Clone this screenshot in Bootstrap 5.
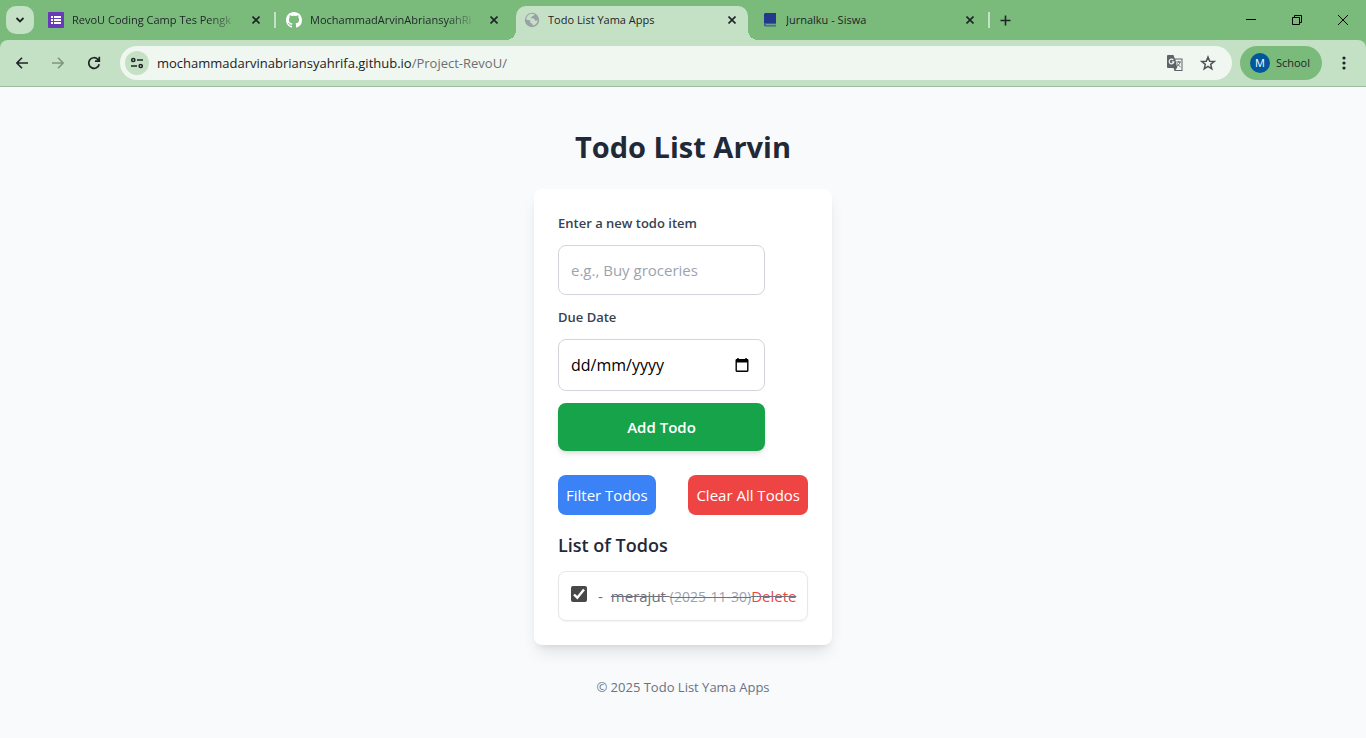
<!DOCTYPE html>
<html lang="en-GB">
<head>
<meta charset="utf-8">
<meta name="viewport" content="width=device-width, initial-scale=1">
<title>Todo List Yama Apps</title>
<link href="https://cdn.jsdelivr.net/npm/bootstrap@5.3.0/dist/css/bootstrap.min.css" rel="stylesheet">
<style>
  :root { --frame: #7abb7c; --bar: #c5e1c5; --ink: #1f2328; }
  body { font-family: "Open Sans", "Noto Sans", sans-serif; font-size: 15px; line-height: 24px; background: #f9fafc; color: #1f2937; }
  svg { display: block; flex: none; }
  .bare { border: 0; background: none; padding: 0; color: inherit; }

  /* Tab strip */
  .tab-strip { height: 40px; padding-left: 6px; background: var(--frame); color: var(--ink); font-size: 11px; line-height: 16px; }
  .tab-search { width: 28px; height: 28px; margin-right: 6px; border-radius: 10px; background: var(--bar); }
  .tab-item { flex: 0 1 238px; min-width: 0; padding: 0 14px 0 8px; }
  .tab-item .title { overflow: hidden; white-space: nowrap; }
  .title-fade { -webkit-mask-image: linear-gradient(90deg, #000 calc(100% - 32px), transparent); mask-image: linear-gradient(90deg, #000 calc(100% - 32px), transparent); }
  .tab-close { width: 16px; height: 16px; flex: none; }
  .tab-divided { border-right: 2px solid var(--bar); height: 16px; margin-right: 2px; flex-basis: 236px; padding-right: 10px; }
  .tab-active { align-self: flex-end; height: 34px; padding-bottom: 6px; background: var(--bar); border-radius: 10px 10px 0 0; flex-basis: 232px; padding-right: 8px; margin-right: 6px; position: relative; }
  .tab-active::before, .tab-active::after { content: ""; position: absolute; bottom: 0; width: 10px; height: 10px; }
  .tab-active::before { right: 100%; background: radial-gradient(circle at 0 0, transparent 10px, var(--bar) 10px); }
  .tab-active::after { left: 100%; background: radial-gradient(circle at 100% 0, transparent 10px, var(--bar) 10px); }
  .win-btn { width: 46px; height: 40px; }

  /* Toolbar */
  .toolbar-wrap { background: var(--frame); }
  .toolbar { height: 47px; background: var(--bar); border-bottom: 1px solid #9dbb9f; border-radius: 8px 8px 0 0; color: var(--ink); }
  .tool-btn { width: 36px; height: 34px; }
  .omnibox { height: 34px; border-radius: 17px; background: #f0f7f0; padding: 0 16px 0 5px; }
  .site-info { width: 24px; height: 24px; border-radius: 50%; background: var(--bar); }
  .address { min-width: 0; font-size: 13px; line-height: 20px; color: #6b6f73; }
  .address b { font-weight: 400; color: #202124; }
  .profile { height: 34px; border-radius: 17px; background: var(--frame); font-size: 11px; padding: 0 12px 0 10px; gap: 6px; }
  .avatar-dot { width: 20px; height: 20px; border-radius: 50%; background: #01579b; color: #fff; line-height: 20px; }

  /* Page */
  .page { padding: 42px 16px 32px; }
  .page-title { font-size: 29px; line-height: 36px; font-weight: 700; margin: 0 0 24px; }
  .todo-panel { width: 100%; max-width: 298px; padding: 24px; background: #fff; border-radius: 8px; box-shadow: 0 10px 15px -3px rgba(0,0,0,.1), 0 4px 6px -4px rgba(0,0,0,.1); }
  .todo-form { max-width: 207px; gap: 12px; }
  .todo-form label { font-size: 13px; line-height: 20px; font-weight: 600; color: #374151; }
  .field { height: 50px; border: 1px solid #d1d5db; border-radius: 8px; padding: 0 12px; font-size: 15px; background: #fff; }
  .field::placeholder { color: #9ca3af; }
  .field-date { height: 52px; padding-right: 15px; }
  .field-date input { min-width: 0; font-size: 16px; outline: 0; }
  .field-date input::placeholder { color: #000; opacity: 1; }
  .btn-add { height: 48px; border-radius: 8px; background: #16a34a; color: #fff; font-size: 15px; font-weight: 600; box-shadow: 0 4px 6px -1px rgba(0,0,0,.1), 0 2px 4px -2px rgba(0,0,0,.1); }
  .btn-soft { height: 40px; border: 0; border-radius: 8px; color: #fff; font-size: 15px; padding: 0 8px; }
  .btn-filter { background: #3b82f6; }
  .btn-clear { background: #ef4444; }
  .list-title { font-size: 18px; line-height: 28px; font-weight: 600; margin: 16px 0 12px; }
  .todo-row { height: 50px; padding: 0 12px; border: 1px solid #e5e7eb; border-radius: 8px; box-shadow: 0 1px 2px rgba(0,0,0,.05); color: #6b7280; }
  .todo-check { appearance: none; width: 16px; height: 16px; margin: 0 11px 4px 0; border-radius: 2px; background: #484848 url("data:image/svg+xml,%3Csvg xmlns='http://www.w3.org/2000/svg' viewBox='0 0 16 16'%3E%3Cpath d='M3 8.5l3.3 3.2L13 3.5' fill='none' stroke='%23fff' stroke-width='2.4'/%3E%3C/svg%3E"); }
  .struck { text-decoration: line-through #6b7280; }
  .due { font-size: 14px; color: #9ca3af; }
  .del { color: #ef4444; }
  .page-foot { font-size: 13px; line-height: 20px; color: #6b7280; margin-top: 32px; }
</style>
</head>
<body>
<header>
  <div class="tab-strip d-flex align-items-center">
    <button class="bare tab-search d-flex align-items-center justify-content-center flex-shrink-0" aria-label="Search tabs">
      <svg width="10" height="10" viewBox="0 0 10 10" fill="none" stroke="#1f2328" stroke-width="1.8"><path d="M1.500 3L5 6.500 8.500 3"/></svg>
    </button>
    <div class="tab-item tab-divided d-flex align-items-center">
      <svg class="me-2" width="16" height="16" viewBox="0 0 16 16"><rect width="16" height="16" rx="1" fill="#673ab7"/><path d="M3 4h2v2H3zM6 4h7v2H6zM3 7h2v2H3zM6 7h7v2H6zM3 10h2v2H3zM6 10h7v2H6z" fill="#fff"/></svg>
      <span class="title title-fade flex-grow-1 me-2">RevoU Coding Camp Tes Pengk</span>
      <button class="bare tab-close d-flex align-items-center justify-content-center" aria-label="Close tab"><svg width="8" height="8" viewBox="0 0 8 8" stroke="#1f2328" stroke-width="1.6"><path d="M.5.5l7 7m0-7l-7 7"/></svg></button>
    </div>
    <div class="tab-item d-flex align-items-center">
      <svg class="me-2" width="16" height="16" viewBox="0 0 16 16"><path fill="#fff" d="M8 0C3.58 0 0 3.58 0 8c0 3.54 2.29 6.53 5.47 7.59.4.07.55-.17.55-.38 0-.19-.01-.82-.01-1.49-2.01.37-2.53-.49-2.69-.94-.09-.23-.48-.94-.82-1.13-.28-.15-.68-.52-.01-.53.63-.01 1.08.58 1.23.82.72 1.21 1.87.87 2.33.66.07-.52.28-.87.51-1.07-1.78-.2-3.64-.89-3.64-3.95 0-.87.31-1.59.82-2.15-.08-.2-.36-1.02.08-2.12 0 0 .67-.21 2.2.82.64-.18 1.32-.27 2-.27s1.36.09 2 .27c1.53-1.04 2.2-.82 2.2-.82.44 1.1.16 1.92.08 2.12.51.56.82 1.27.82 2.15 0 3.07-1.87 3.75-3.65 3.95.29.25.54.73.54 1.48 0 1.07-.01 1.93-.01 2.2 0 .21.15.46.55.38A8.010 8.010 0 0 0 16 8c0-4.420-3.580-8-8-8z"/></svg>
      <span class="title title-fade flex-grow-1 me-2">MochammadArvinAbriansyahRi</span>
      <button class="bare tab-close d-flex align-items-center justify-content-center" aria-label="Close tab"><svg width="8" height="8" viewBox="0 0 8 8" stroke="#1f2328" stroke-width="1.6"><path d="M.5.5l7 7m0-7l-7 7"/></svg></button>
    </div>
    <div class="tab-item tab-active d-flex align-items-center">
      <svg class="me-2" width="16" height="16" viewBox="0 0 16 16"><circle cx="8" cy="8" r="7.200" fill="#9aa0a6"/><path d="M6.800 1.800c1.500 0 3.200.2 3.600.6-.2 1.200-1.400 1.600-2.400 1.900-.3.900-1.300 1.100-1.600 1.900.9.400 2.700-.2 3.600.6.700.7.500 1.600 1.600 1.900.9.300 1.800-.2 2.200-.6-.1 3-2.500 5.400-5.200 5.500-.4-.5.1-1.200-.3-1.800-.6-.6-1.700-.4-2-1.300-.2-.6.400-1.300-.1-1.900-.9-.8-2.700-.6-4-1.200C2.500 4.500 4.300 2.300 6.800 1.800z" fill="#c5e1c5"/></svg>
      <span class="title flex-grow-1 me-2">Todo List Yama Apps</span>
      <button class="bare tab-close d-flex align-items-center justify-content-center" aria-label="Close tab"><svg width="8" height="8" viewBox="0 0 8 8" stroke="#1f2328" stroke-width="1.6"><path d="M.5.5l7 7m0-7l-7 7"/></svg></button>
    </div>
    <div class="tab-item tab-divided d-flex align-items-center">
      <svg class="me-2" width="16" height="16" viewBox="0 0 16 16"><path d="M3 1h11v10H2V2z" fill="#233a8c"/><path d="M2 11h12v1.200H3.800v1H14V14.500H3L2 13.500z" fill="#3d5f96"/></svg>
      <span class="title flex-grow-1 me-2">Jurnalku - Siswa</span>
      <button class="bare tab-close d-flex align-items-center justify-content-center" aria-label="Close tab"><svg width="8" height="8" viewBox="0 0 8 8" stroke="#1f2328" stroke-width="1.6"><path d="M.5.5l7 7m0-7l-7 7"/></svg></button>
    </div>
    <button class="bare d-flex p-2" aria-label="New tab"><svg width="11" height="11" viewBox="0 0 11 11" stroke="#1f2328" stroke-width="1.600"><path d="M5.500 .5v10M.5 5.500h10"/></svg></button>
    <div class="d-flex ms-auto">
      <button class="bare win-btn d-flex align-items-center justify-content-center" aria-label="Minimise"><svg width="10" height="10" viewBox="0 0 10 10" stroke="#000"><path d="M0 4.500h10"/></svg></button>
      <button class="bare win-btn d-flex align-items-center justify-content-center" aria-label="Restore"><svg width="10" height="10" viewBox="0 0 10 10" fill="none" stroke="#000"><path d="M.5 2.500h7v7h-7zM2.500 2.500v-2h7v7h-2"/></svg></button>
      <button class="bare win-btn d-flex align-items-center justify-content-center" aria-label="Close"><svg width="10" height="10" viewBox="0 0 10 10" stroke="#000"><path d="M0 0l10 10M10 0L0 10"/></svg></button>
    </div>
  </div>
  <div class="toolbar-wrap">
    <div class="toolbar d-flex align-items-center px-1">
      <button class="bare tool-btn d-flex align-items-center justify-content-center" aria-label="Back"><svg width="12" height="12" viewBox="0 0 12 12" fill="none" stroke="#1f2328" stroke-width="1.600"><path d="M12 6H1M6 .8L.9 6 6 11.200"/></svg></button>
      <button class="bare tool-btn d-flex align-items-center justify-content-center" aria-label="Forward"><svg width="12" height="12" viewBox="0 0 12 12" fill="none" stroke="#7f9580" stroke-width="1.600"><path d="M0 6h11M6 .8L11.100 6 6 11.200"/></svg></button>
      <button class="bare tool-btn d-flex align-items-center justify-content-center" aria-label="Reload"><svg width="14" height="14" viewBox="0 0 14 14" fill="none" stroke="#1f2328" stroke-width="1.700"><path d="M12.200 8.200A5.300 5.300 0 1 1 10.800 3.300L12.200 4.800M12.300.8v4.400H8"/></svg></button>
      <div class="omnibox d-flex align-items-center flex-grow-1 ms-2">
        <button class="bare site-info d-flex align-items-center justify-content-center flex-shrink-0 me-2" aria-label="View site information"><svg width="12" height="12" viewBox="0 0 12 12" fill="none" stroke="#1f2328" stroke-width="1.500"><circle cx="2.300" cy="3" r="1.600"/><path d="M6 3h6M0 9h6"/><circle cx="9.700" cy="9" r="1.600"/></svg></button>
        <div class="address flex-grow-1 text-truncate"><b>mochammadarvinabriansyahrifa.github.io</b>/Project-RevoU/</div>
        <button class="bare me-3" aria-label="Translate this page"><svg width="18" height="18" viewBox="0 0 18 18"><path d="M2 1h5.500l1.200 3.500H16.500V17H8.500l-1-3H2q-1 0-1-1V2q0-1 1-1z" fill="#5f6368"/><path d="M9.400 5.500H15.500V16H9.500L11.200 13.500z" fill="#f0f7f0"/><path d="M7.300 6A2.300 2.300 0 1 0 7.800 7.800H5.800" fill="none" stroke="#f0f7f0" stroke-width="1.200"/><path d="M10.300 8h4.700M12.700 7v1M14 8c-.4 2-1.800 3.600-3 4.200M11.500 9.500c.6 1.500 1.800 2.800 3 3.400" fill="none" stroke="#5f6368"/></svg></button>
        <button class="bare" aria-label="Bookmark this tab"><svg width="16" height="16" viewBox="0 0 16 16" fill="none" stroke="#4f5357" stroke-width="1.500"><path d="M8 2l1.700 4.200 4.500.3-3.500 2.900 1.100 4.400L8 11.400l-3.800 2.400 1.100-4.400L1.800 6.500l4.500-.3z"/></svg></button>
      </div>
      <button class="bare profile d-flex align-items-center ms-2 flex-shrink-0"><span class="avatar-dot text-center">M</span><span>School</span></button>
      <button class="bare tool-btn d-flex align-items-center justify-content-center ms-1" aria-label="Menu"><svg width="4" height="14" viewBox="0 0 4 14" fill="#1f2328"><circle cx="2" cy="2" r="1.600"/><circle cx="2" cy="7" r="1.600"/><circle cx="2" cy="12" r="1.600"/></svg></button>
    </div>
  </div>
</header>

<main class="page d-flex flex-column align-items-center">
  <h1 class="page-title">Todo List Arvin</h1>
  <section class="todo-panel">
    <form class="todo-form d-flex flex-column">
      <label for="todo">Enter a new todo item</label>
      <input id="todo" class="field w-100" type="text" placeholder="e.g., Buy groceries">
      <label for="due">Due Date</label>
      <div class="field field-date d-flex align-items-center">
        <input id="due" class="bare flex-grow-1" type="text" inputmode="numeric" placeholder="dd/mm/yyyy">
        <button class="bare" type="button" aria-label="Show date picker"><svg width="14" height="16" viewBox="0 0 14 16"><path d="M3 1v2M11 1v2" stroke="#000" stroke-width="1.500"/><rect x="1.200" y="2.800" width="11.600" height="11.400" rx=".6" fill="none" stroke="#000" stroke-width="1.400"/><path d="M1 2.500h12V5.500H1z"/></svg></button>
      </div>
      <button class="btn btn-add w-100 p-0" type="button">Add Todo</button>
    </form>
    <div class="d-flex justify-content-between mt-4">
      <button class="btn btn-soft btn-filter" type="button">Filter Todos</button>
      <button class="btn btn-soft btn-clear" type="button">Clear All Todos</button>
    </div>
    <h2 class="list-title">List of Todos</h2>
    <ul class="list-unstyled mb-0">
      <li class="todo-row d-flex align-items-center text-nowrap">
        <input id="item1" class="todo-check flex-shrink-0" type="checkbox" checked>
        <span class="me-2">-</span>
        <label for="item1" class="struck">merajut <span class="due">(2025-11-30)</span></label>
        <button class="bare del struck" type="button">Delete</button>
      </li>
    </ul>
  </section>
  <footer class="page-foot">© 2025 Todo List Yama Apps</footer>
</main>
<script src="https://cdn.jsdelivr.net/npm/bootstrap@5.3.0/dist/js/bootstrap.bundle.min.js"></script>
</body>
</html>
